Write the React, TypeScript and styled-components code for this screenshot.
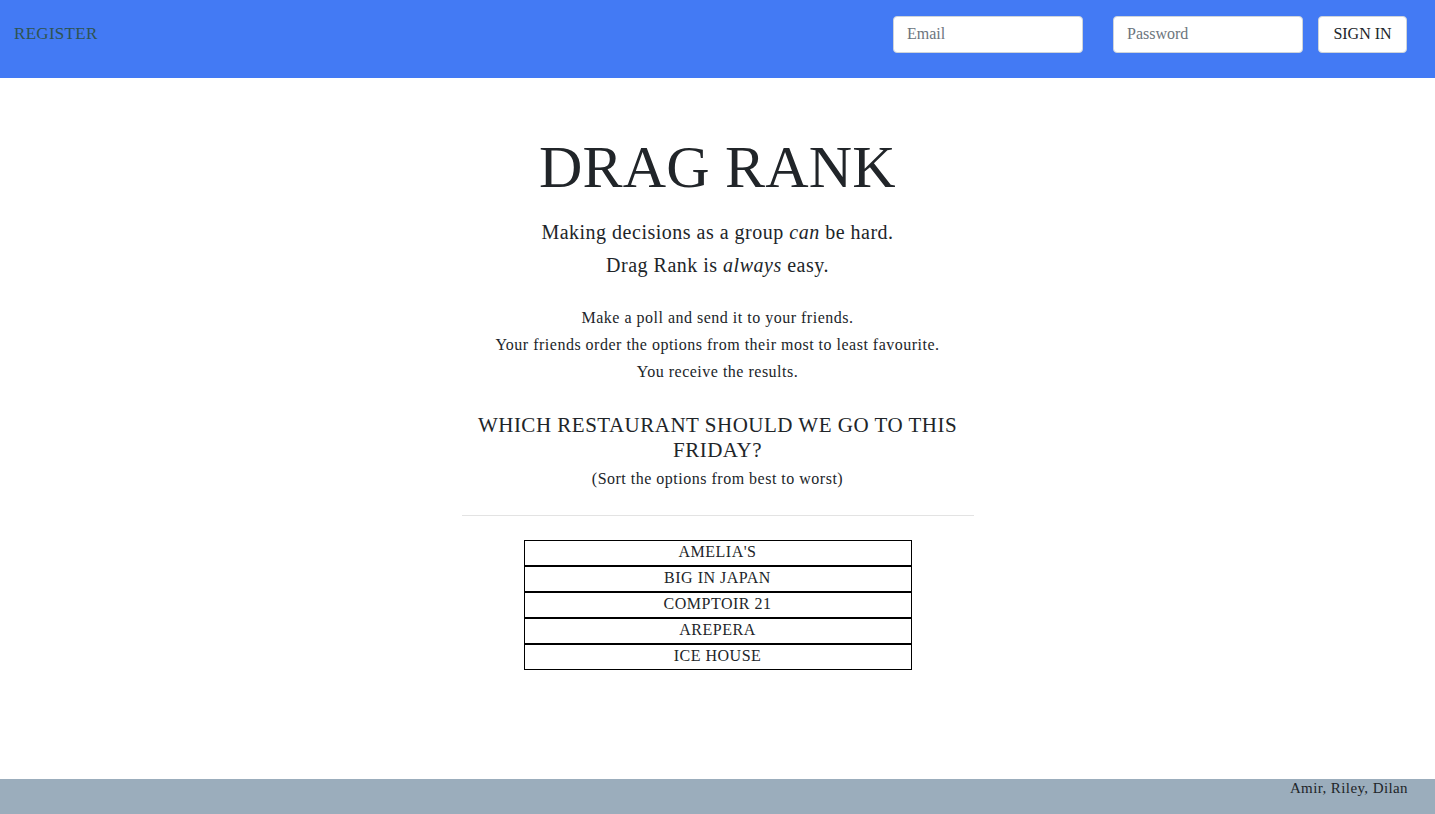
import styled, { createGlobalStyle } from "styled-components";

const GlobalStyle = createGlobalStyle`
  html, body {
    margin: 0;
    padding: 0;
  }
  body {
    font-family: "Liberation Serif", "Times New Roman", serif;
    color: #212529;
    background: #ffffff;
    letter-spacing: 0.5px;
  }
`;

const Page = styled.div`
  display: flex;
  flex-direction: column;
  min-height: 100vh;
`;

const Header = styled.header`
  display: flex;
  align-items: flex-start;
  justify-content: space-between;
  height: 78px;
  box-sizing: border-box;
  padding: 16px 28px 0 14px;
  background-color: #437af4;
`;

const RegisterLink = styled.a`
  margin-top: 8px;
  font-size: 17px;
  color: #2f5450;
  text-decoration: none;
  letter-spacing: 0.3px;
  cursor: pointer;
`;

const SignInForm = styled.form`
  display: flex;
  align-items: center;
`;

const Field = styled.input<{ gap?: number }>`
  width: 190px;
  height: 37px;
  box-sizing: border-box;
  margin-right: ${(props) => props.gap ?? 0}px;
  padding: 0 13px 2px;
  border: 1px solid #ced4da;
  border-radius: 4px;
  font-family: inherit;
  font-size: 16px;
  color: #495057;
  background: #ffffff;
  &::placeholder {
    color: #6c757d;
  }
`;

const SignInButton = styled.button`
  width: 89px;
  height: 37px;
  padding-bottom: 2px;
  border: 1px solid #ced4da;
  border-radius: 4px;
  background: #ffffff;
  font-family: inherit;
  font-size: 16px;
  color: #212529;
  cursor: pointer;
`;

const Main = styled.main`
  flex: 1;
  display: flex;
  flex-direction: column;
  align-items: center;
  padding-top: 52px;
  padding-bottom: 40px;
`;

const Title = styled.h1`
  margin: 0;
  font-size: 60px;
  line-height: 74px;
  font-weight: 400;
  letter-spacing: 0.2px;
`;

const Tagline = styled.p`
  margin: 12px 0 0;
  font-size: 20px;
  line-height: 33px;
  text-align: center;
`;

const Description = styled.p`
  margin: 22px 0 0;
  font-size: 16px;
  line-height: 27px;
  text-align: center;
`;

const PollSection = styled.section`
  width: 512px;
  display: flex;
  flex-direction: column;
  align-items: center;
`;

const Question = styled.h2`
  margin: 28px 0 0;
  width: 490px;
  font-size: 21px;
  line-height: 25px;
  font-weight: 400;
  text-align: center;
  text-transform: uppercase;
`;

const Hint = styled.p`
  margin: 4px 0 0;
  font-size: 16px;
  line-height: 24px;
  text-align: center;
`;

const Divider = styled.hr`
  align-self: stretch;
  margin: 24px 0 0;
  border: 0;
  border-top: 1px solid #e3e3e3;
`;

const OptionList = styled.ul`
  list-style: none;
  margin: 24px 0 0;
  padding: 0;
  width: 388px;
`;

const Option = styled.li`
  height: 26px;
  box-sizing: border-box;
  border: 1px solid #000000;
  font-size: 16px;
  line-height: 21px;
  text-align: center;
  text-transform: uppercase;
  cursor: grab;
`;

const Footer = styled.footer`
  height: 35px;
  box-sizing: border-box;
  padding: 0 27px;
  background-color: #9badbc;
  font-size: 15px;
  line-height: 18px;
  text-align: right;
  color: #212529;
  letter-spacing: 0.4px;
`;

const options = ["Amelia's", "Big in Japan", "Comptoir 21", "Arepera", "Ice House"];

export default function App() {
  return (
    <>
      <GlobalStyle />
      <Page>
        <Header>
          <RegisterLink>REGISTER</RegisterLink>
          <SignInForm onSubmit={(e) => e.preventDefault()}>
            <Field type="email" placeholder="Email" gap={30} />
            <Field type="password" placeholder="Password" gap={15} />
            <SignInButton type="submit">SIGN IN</SignInButton>
          </SignInForm>
        </Header>
        <Main>
          <Title>DRAG RANK</Title>
          <Tagline>
            Making decisions as a group <em>can</em> be hard.
            <br />
            Drag Rank is <em>always</em> easy.
          </Tagline>
          <Description>
            Make a poll and send it to your friends.
            <br />
            Your friends order the options from their most to least favourite.
            <br />
            You receive the results.
          </Description>
          <PollSection>
            <Question>Which restaurant should we go to this Friday?</Question>
            <Hint>(Sort the options from best to worst)</Hint>
            <Divider />
            <OptionList>
              {options.map((name) => (
                <Option key={name}>{name}</Option>
              ))}
            </OptionList>
          </PollSection>
        </Main>
        <Footer>Amir, Riley, Dilan</Footer>
      </Page>
    </>
  );
}
